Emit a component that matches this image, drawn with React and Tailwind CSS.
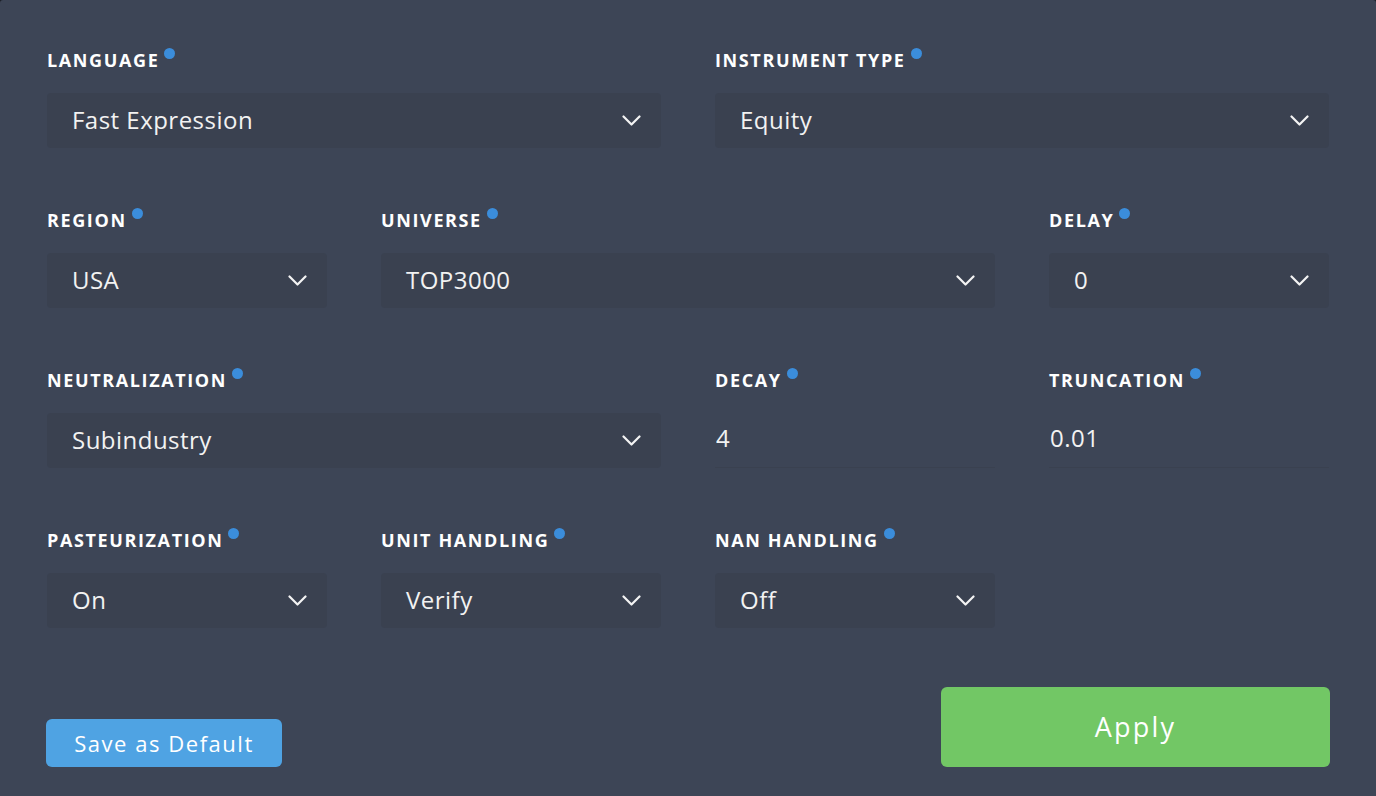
import React, { useState } from 'react';

const Dot = () => (
    <span className="ml-[5px] -mt-[13px] inline-block h-[11px] w-[11px] rounded-full bg-[#3b8ddb]" />
);

const Label = ({ text }) => (
    <div className="flex h-6 items-center">
        <span className="text-[18px] font-bold tracking-[0.09em] text-white leading-6">{text}</span>
        <Dot />
    </div>
);

const Chevron = () => (
    <svg width="19" height="12" viewBox="0 0 19 12" fill="none">
        <path d="M1.5 1.5 L9.5 9.5 L17.5 1.5" stroke="#f4f4f4" strokeWidth="2.2" strokeLinecap="round" strokeLinejoin="round" />
    </svg>
);

const SelectField = ({ label, value, span }) => (
    <div className={span}>
        <Label text={label} />
        <div className="mt-[21px] flex h-[55px] items-center justify-between rounded-[4px] bg-[#3a4150] pl-[25px] pr-[20px] cursor-pointer">
            <span className="-mt-[2px] text-[24px] tracking-[0.02em] text-[#f2f2f2]">{value}</span>
            <Chevron />
        </div>
    </div>
);

const InputField = ({ label, initial }) => {
    const [val, setVal] = useState(initial);
    return (
        <div>
            <Label text={label} />
            <div className="mt-[21px] flex h-[55px] items-center border-b border-[#3a4150]">
                <input
                    type="text"
                    value={val}
                    onChange={(e) => setVal(e.target.value)}
                    className="w-full bg-transparent pl-px text-[24px] tracking-[0.02em] text-[#f2f2f2] outline-none -mt-[4px]"
                />
            </div>
        </div>
    );
};

const App = () => {
    return (
        <div className="min-h-screen bg-[#1b1e25]" style={{ fontFamily: '"Open Sans", "Noto Sans", sans-serif' }}>
            <div className="min-h-screen rounded-t-[3px] bg-[#3d4556] px-[47px] pt-[48px] pb-[29px]">
                <div className="grid grid-cols-4 gap-x-[54px] gap-y-[60px]">
                    <SelectField label="LANGUAGE" value="Fast Expression" span="col-span-2" />
                    <SelectField label="INSTRUMENT TYPE" value="Equity" span="col-span-2" />

                    <SelectField label="REGION" value="USA" />
                    <SelectField label="UNIVERSE" value="TOP3000" span="col-span-2" />
                    <SelectField label="DELAY" value="0" />

                    <SelectField label="NEUTRALIZATION" value="Subindustry" span="col-span-2" />
                    <InputField label="DECAY" initial="4" />
                    <InputField label="TRUNCATION" initial="0.01" />

                    <SelectField label="PASTEURIZATION" value="On" />
                    <SelectField label="UNIT HANDLING" value="Verify" />
                    <SelectField label="NAN HANDLING" value="Off" />
                </div>

                <div className="mt-[59px] flex items-end justify-between">
                    <button className="-ml-px h-[48px] w-[236px] rounded-[6px] bg-[#4fa3e3] text-[22px] tracking-[0.07em] text-white">
                        Save as Default
                    </button>
                    <button className="mr-[-1px] h-[80px] w-[389px] rounded-[6px] bg-[#72c765] text-[27px] tracking-[0.08em] text-white">
                        Apply
                    </button>
                </div>
            </div>
        </div>
    );
};

export default App;
